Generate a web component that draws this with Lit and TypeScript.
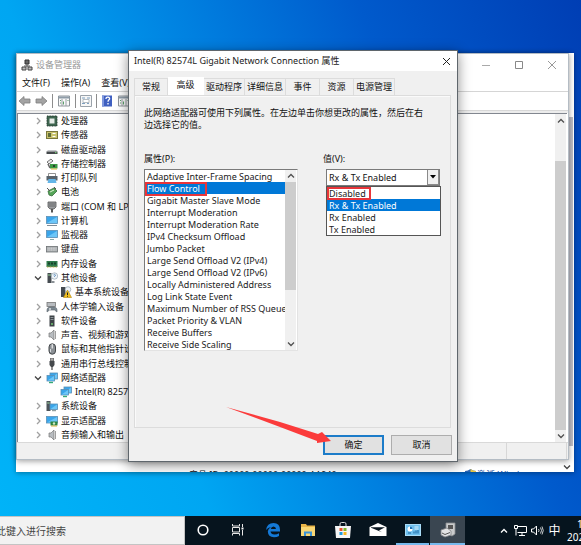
import { LitElement, html, svg, css } from "lit";
import type { TemplateResult } from "lit";
import { customElement } from "lit/decorators.js";
import { classMap } from "lit/directives/class-map.js";

const monitor = (x: number, y: number, w: number, h: number) => svg`
  <rect x=${x} y=${y} width=${w} height=${h} fill="#3aa5ea" stroke="#5b8fb5" stroke-width=".8"/>
  <path d="M${x + 0.5} ${y + h - 0.5}L${x + w - 0.5} ${y + 0.5}V${y + h - 0.5}z" fill="#6cc6f8"/>`;

const speaker = svg`<path d="M3 4h2l3-3v10l-3-3H3z" fill="#b9bdc1" stroke="#777" stroke-width=".7"/><path d="M9.500 2v8" fill="none" stroke="#888" stroke-width=".8"/>`;

const dualMonitor = svg`${monitor(4, 1, 7.5, 6)}${monitor(1, 3.5, 7.5, 5.5)}<path d="M3 10.500h4" stroke="#35a877" stroke-width="1.400"/>`;

const deviceIcons: Record<string, unknown> = {
  cpu: svg`<rect x="1" y="1" width="10" height="10" fill="#3f6650" stroke="#263e32" stroke-dasharray="1 .6"/><rect x="3.500" y="3.500" width="5" height="5" fill="#e6ece8"/>`,
  sensor: svg`<rect x=".5" y="2.500" width="11" height="7" fill="#c9c36d" stroke="#7a773c"/><rect x="2" y="4" width="3" height="4" fill="#5f6c3a"/><path d="M6.500 4.500h3M6.500 7.500h3" stroke="#fff"/>`,
  disk: svg`<path d="M2 6h8l1.500 1.500H.5z" fill="#c3c6c9"/><rect x=".5" y="7.500" width="11" height="2.500" fill="#44484b"/><path d="M9 8.700h1.500" stroke="#7be07b"/>`,
  storage: svg`<path d="M1 4l4-3 2 2-4 3z" fill="#e8e8e8" stroke="#555" stroke-width=".8"/><path d="M2 6l2 4" stroke="#666" stroke-width="1.500"/><rect x="4" y="6" width="7.500" height="4.500" fill="#3c9a45"/><path d="M5 11h6" stroke="#e0b93b"/><circle cx="8" cy="8" r="1" fill="#222"/>`,
  printer: svg`<path d="M2.500 1.500h7V5h-7z" fill="#fff" stroke="#777" stroke-width=".8"/><rect x=".5" y="4" width="11" height="4.500" fill="#59636b"/><path d="M2.500 7h7l1 4h-9z" fill="#64b6e8"/>`,
  battery: svg`<path d="M2 5l6-3 3 3-5 5-3-1z" fill="#55a558" stroke="#376b3b" stroke-width=".8"/><path d="M1 2l4 4M8 1l2 2" stroke="#555"/><path d="M4 6l4-2" stroke="#dff5d5"/>`,
  port: svg`<path d="M2 1h8v5l-2 2H4L2 6z" fill="#9a9da0" stroke="#555" stroke-width=".8"/><path d="M4 2v4M6 2v4M8 2v4" stroke="#555" stroke-width=".7"/><path d="M6 8v3.500" stroke="#555" stroke-width="2"/>`,
  computer: svg`${monitor(0.5, 1.5, 11, 7)}<path d="M1 10.500h10" stroke="#7f8c96"/>`,
  monitor: svg`${monitor(0.5, 1.5, 11, 7)}<path d="M4 10.500h4" stroke="#8aa" />`,
  keyboard: svg`<rect x=".5" y="3.500" width="11" height="5.500" fill="#a9adb0" stroke="#6c7073" stroke-width=".8"/><path d="M1.500 5.200h9M1.500 7h9" stroke="#e6e6e6" stroke-width=".8" stroke-dasharray="1.200 .5"/>`,
  memory: svg`<rect x=".5" y="3" width="11" height="6" fill="#2f7a4c"/><path d="M2 4.500h2v2H2zM5 4.500h2v2H5zM8 4.500h2v2H8z" fill="#17402a"/><path d="M1 9h10" stroke="#bfa94a" stroke-dasharray="1 .5"/>`,
  other: svg`<path d="M1.500 1h4v10h-4z" fill="#454b50"/><path d="M2 3h3" stroke="#8fd08f"/><circle cx="8.500" cy="4" r="3.200" fill="#eef3f7" stroke="#8699a8" stroke-width=".6"/><path d="M7.500 3q1-1.300 2 0q0 .8-1 1.200v.7" fill="none" stroke="#3d77b0" stroke-width=".8"/><path d="M5.500 9h3v2h-3z" fill="#8c9297"/>`,
  warning: svg`<path d="M1 1h4.500v10H1z" fill="#454b50"/><circle cx="8" cy="3.500" r="2.800" fill="#eef3f7" stroke="#8699a8" stroke-width=".6"/><path d="M7.500 4l4 7.500h-8z" fill="#f3c11d" stroke="#b18511" stroke-width=".6"/><path d="M7.500 6.500v2.500M7.500 9.800v.9" stroke="#222"/>`,
  hid: svg`<rect x="1" y="1.500" width="8.500" height="4" fill="#b8bcc0" stroke="#777" stroke-width=".8"/><path d="M1 11q-.5-5 3-5h4q3.500 0 3 5l-2.500-2h-5z" fill="#7d8991" stroke="#59636b" stroke-width=".6"/><path d="M3 8h2M4 7v2" stroke="#fff" stroke-width=".7"/>`,
  software: svg`<rect x="3.500" y=".5" width="5" height="11" fill="#3d4347"/><path d="M4.500 2.500h3M4.500 4.500h3" stroke="#8c9499"/><circle cx="6" cy="9" r=".9" fill="#76d276"/>`,
  sound: speaker,
  mouse: svg`<rect x="3" y=".8" width="6.500" height="10.400" rx="3.200" fill="#8b9095" stroke="#44484b"/><path d="M6.200 1v4.500" stroke="#fff"/><path d="M4.500 6v3" stroke="#d8dcdf"/>`,
  usb: svg`<path d="M4.500 0h3v3h-3z" fill="#aaa" stroke="#555" stroke-width=".7"/><path d="M3.500 3h5v4L7 9H5L3.500 7z" fill="#45494c"/><path d="M6 9v3" stroke="#555" stroke-width="1.300"/>`,
  network: dualMonitor,
  system: svg`<path d="M.5 1h4v10h-4z" fill="#4c5359"/><path d="M1.200 3h2.500" stroke="#9fd89f"/>${monitor(4, 4, 7.5, 5.500)}<path d="M6 10.700h4" stroke="#788"/>`,
  display: svg`${monitor(0.5, 1.500, 11, 6.500)}<rect x="4.500" y="6.500" width="7" height="4" fill="#2e8541"/><circle cx="8" cy="8.500" r="1.200" fill="#cde7c8"/><path d="M5 11h6" stroke="#d9b440"/>`,
};

interface Device {
  name: string;
  icon: string;
  child?: boolean;
  open?: boolean;
}

const devices: Device[] = [
  { name: "处理器", icon: "cpu" },
  { name: "传感器", icon: "sensor" },
  { name: "磁盘驱动器", icon: "disk" },
  { name: "存储控制器", icon: "storage" },
  { name: "打印队列", icon: "printer" },
  { name: "电池", icon: "battery" },
  { name: "端口 (COM 和 LPT)", icon: "port" },
  { name: "计算机", icon: "computer" },
  { name: "监视器", icon: "monitor" },
  { name: "键盘", icon: "keyboard" },
  { name: "内存设备", icon: "memory" },
  { name: "其他设备", icon: "other", open: true },
  { name: "基本系统设备", icon: "warning", child: true },
  { name: "人体学输入设备", icon: "hid" },
  { name: "软件设备", icon: "software" },
  { name: "声音、视频和游戏控制器", icon: "sound" },
  { name: "鼠标和其他指针设备", icon: "mouse" },
  { name: "通用串行总线控制器", icon: "usb" },
  { name: "网络适配器", icon: "network", open: true },
  { name: "Intel(R) 82574L Gigabit", icon: "network", child: true },
  { name: "系统设备", icon: "system" },
  { name: "显示适配器", icon: "display" },
  { name: "音频输入和输出", icon: "sound" },
];

const properties = [
  "Adaptive Inter-Frame Spacing",
  "Flow Control",
  "Gigabit Master Slave Mode",
  "Interrupt Moderation",
  "Interrupt Moderation Rate",
  "IPv4 Checksum Offload",
  "Jumbo Packet",
  "Large Send Offload V2 (IPv4)",
  "Large Send Offload V2 (IPv6)",
  "Locally Administered Address",
  "Log Link State Event",
  "Maximum Number of RSS Queue",
  "Packet Priority & VLAN",
  "Receive Buffers",
  "Receive Side Scaling",
];

const values = ["Disabled", "Rx & Tx Enabled", "Rx Enabled", "Tx Enabled"];

const tabs = ["常规", "高级", "驱动程序", "详细信息", "事件", "资源", "电源管理"];

const base = css`
  * {
    box-sizing: border-box;
  }
  button,
  input,
  select {
    font: inherit;
    color: inherit;
    margin: 0;
    padding: 0;
    border: 0;
    background: none;
    border-radius: 0;
    outline: none;
  }
  ul {
    list-style: none;
    margin: 0;
    padding: 0;
  }
  svg {
    display: block;
    flex: none;
  }
`;

const chevron = (dir: "up" | "down" | "right", cls = "") => {
  const d = { up: "M1 5.500L4 2.500L7 5.500", down: "M1 2.500L4 5.500L7 2.500", right: "M3 1L6 4L3 7" }[dir];
  return html`<svg class=${cls} width="8" height="8" viewBox="0 0 8 8" aria-hidden="true">
    <path d=${d} fill="none" stroke="currentColor" stroke-width="1.300" />
  </svg>`;
};

@customElement("device-manager")
export class DeviceManager extends LitElement {
  static styles = [
    base,
    css`
      :host {
        display: flex;
        flex-direction: column;
        background: #fff;
        border: 1px solid #b4bcc4;
        box-shadow: 0 1px 6px rgba(0, 0, 0, 0.4);
      }
      .title {
        display: flex;
        align-items: center;
        height: 21px;
        padding: 0 8px 0 4px;
        color: #999;
      }
      .title h2 {
        flex: 1;
        margin: 0 0 0 3px;
        font: inherit;
      }
      .title button {
        display: grid;
        place-items: center;
        width: 16px;
        height: 16px;
        margin-left: 17px;
      }
      .menu {
        display: flex;
        gap: 11px;
        height: 17px;
        align-items: center;
        padding-left: 5px;
        border-bottom: 1px solid #d5d5d5;
      }
      .tools {
        display: flex;
        align-items: center;
        gap: 4px;
        height: 18px;
        padding-left: 1px;
      }
      .sep {
        width: 1px;
        height: 14px;
        background: #8d8d8d;
      }
      .edge {
        height: 3px;
        background: #ececec;
        border-top: 1px solid #d8d8d8;
      }
      .view {
        display: flex;
        border: 1px solid #828790;
        border-width: 1px 0 0 1px;
        margin-right: 1px;
      }
      .tree {
        flex: 1;
        display: grid;
        grid-template-rows: repeat(23, 1fr);
        min-height: 328px;
        overflow: hidden;
      }
      .node {
        display: flex;
        align-items: center;
        min-height: 0;
        padding-left: 16px;
        white-space: nowrap;
      }
      .node.child {
        padding-left: 42px;
      }
      .twist {
        width: 8px;
        height: 8px;
        margin-right: 4px;
        color: #a0a0a0;
      }
      .twist.open {
        color: #444;
      }
      .name {
        margin-left: 3px;
      }
      .scroll {
        display: flex;
        flex-direction: column;
        align-items: center;
        width: 11px;
        margin-right: 1px;
        padding: 3px 0 2px;
        background: #f0f0f0;
        color: #505050;
      }
      .thumb {
        flex: 1;
        width: 100%;
        margin: 36px 0 2px;
        background: #cdcdcd;
      }
      .status {
        display: grid;
        grid-template-columns: 1fr 60px;
        height: 17px;
        background: #f0f0f0;
        border-top: 1px solid #d9d9d9;
        padding-right: 1px;
      }
      .cell {
        border-right: 1px solid #d7d7d7;
      }
    `,
  ];

  render() {
    return html`
      <div class="title">
        <svg width="12" height="12" viewBox="0 0 12 12" aria-hidden="true">
          <path d="M4 1h4v4H4z" fill="#666" stroke="#333" />
          <path d="M1 8h4v3H1zM7 8h4v3H7z" fill="#bbb" stroke="#444" />
          <path d="M6 5v3M3 7h6" stroke="#555" />
        </svg>
        <h2>设备管理器</h2>
        <button aria-label="最小化"><svg width="8" height="8"><path d="M0 4.500h8" stroke="#aaa" /></svg></button>
        <button aria-label="最大化">
          <svg width="8" height="8"><path d="M.5 .5h7v7h-7z" fill="none" stroke="#888" /></svg>
        </button>
        <button aria-label="关闭"><svg width="8" height="8"><path d="M0 0l8 8M8 0l-8 8" stroke="#999" /></svg></button>
      </div>
      <div class="menu">
        <button>文件(F)</button>
        <button>操作(A)</button>
        <button>查看(V)</button>
      </div>
      <div class="tools">
        ${this.arrow(false)} ${this.arrow(true)}
        <span class="sep"></span>
        ${this.panel()}
        <span class="sep"></span>
        <button aria-label="属性">
          <svg width="12" height="12" viewBox="0 0 12 12">
            <path d="M.5 .5h11v11H.5z" fill="#f7f7f7" stroke="#9aa2aa" />
            <path d="M2 3h3M7 3h3M2 8.500h3M7 8.500h2" stroke="#7da0c0" />
            <path d="M3 4.500h6v3H3z" fill="#fff" stroke="#a5adb5" stroke-width=".8" />
          </svg>
        </button>
        <span class="sep"></span>
        <button aria-label="帮助">
          <svg width="12" height="12" viewBox="0 0 12 12">
            <path d="M1 .5h10v11H1z" fill="#3f5fc0" />
            <path d="M1 .5h2v11H1z" fill="#7f97dd" />
            <path d="M5 4q0-2 2-1.800t1.500 2q-1.500 1-1.500 2.500M7 8v1.500" fill="none" stroke="#fff" stroke-width="1.300" />
          </svg>
        </button>
        ${this.panel()}
      </div>
      <div class="edge"></div>
      <div class="view">
        <ul class="tree" role="tree">
          ${devices.map(
            (d) => html`<li class=${classMap({ node: true, child: !!d.child })} role="treeitem">
              ${d.child ? "" : chevron(d.open ? "down" : "right", d.open ? "twist open" : "twist")}
              <svg width="12" height="12" viewBox="0 0 12 12" aria-hidden="true">${deviceIcons[d.icon]}</svg>
              <span class="name">${d.name}</span>
            </li>`
          )}
        </ul>
        <div class="scroll">${chevron("up")}<span class="thumb"></span>${chevron("down")}</div>
      </div>
      <div class="status"><span class="cell"></span><span class="cell"></span></div>
    `;
  }

  private arrow(forward: boolean): TemplateResult {
    return html`<button aria-label=${forward ? "前进" : "后退"}>
      <svg width="13" height="12" viewBox="0 0 13 12">
        <path
          d=${forward ? "M12 6L7 1.500V4H1v4h6v2.500z" : "M1 6l5-4.500V4h6v4H6v2.500z"}
          fill="#a3a3a3"
          stroke="#7e7e7e"
          stroke-width=".8"
        />
      </svg>
    </button>`;
  }

  private panel(): TemplateResult {
    return html`<button aria-label="显示窗格">
      <svg width="14" height="12" viewBox="0 0 14 12">
        <path d="M1.500 1h11v10h-11z" fill="#fafafa" stroke="#8f959a" />
        <path d="M1.500 2.500h11" stroke="#8f9ca8" stroke-width="2" />
        <path d="M5 4v7M9 4v7" stroke="#9a9fa4" />
        <path d="M3 5.500h1M10.500 5.500h1M3 8h1M6.500 6.500v3" stroke="#5aa06a" />
      </svg>
    </button>`;
  }
}

@customElement("adapter-dialog")
export class AdapterDialog extends LitElement {
  static styles = [
    base,
    css`
      :host {
        display: block;
        background: #f0f0f0;
        border: 1px solid #5f666c;
        box-shadow: 0 3px 12px rgba(0, 0, 0, 0.45);
      }
      .title {
        display: flex;
        align-items: center;
        justify-content: space-between;
        height: 20px;
        padding: 0 5px;
        background: #fff;
        color: #222;
      }
      .title h2 {
        margin: 0;
        font: inherit;
      }
      .title button {
        padding: 1px;
      }
      .tabs {
        display: flex;
        align-items: flex-end;
        height: 24px;
        padding: 0 5px;
      }
      .tab {
        height: 17px;
        min-width: 34px;
        padding: 0 2px;
        border: 1px solid #dcdcdc;
        border-width: 1px 1px 0 0;
        white-space: nowrap;
      }
      .tab:first-child {
        border-left-width: 1px;
      }
      .tab.active {
        height: 18px;
        min-width: 36px;
        padding-bottom: 4px;
        background: #fff;
        border-color: #fff;
      }
      .page {
        display: flex;
        flex-direction: column;
        min-height: 333px;
        margin: 0 6px 0 5px;
        padding: 11px 9px 0;
        border: 1px solid #dcdcdc;
        box-shadow: inset 1px 1px #fafafa;
      }
      .hint {
        margin: 0;
        padding-right: 16px;
        line-height: 12px;
      }
      .fields {
        display: grid;
        grid-template-columns: 154px 115px;
        justify-content: space-between;
        align-items: start;
        margin-top: 22px;
      }
      .label {
        display: block;
        height: 16px;
        line-height: 12px;
      }
      .label.value {
        margin-left: -3px;
      }
      .box {
        position: relative;
        display: flex;
        background: #fff;
        border: 1px solid #7a7a7a;
        border-right-color: #e3e3e3;
        border-bottom-color: #e3e3e3;
        padding-right: 1px;
      }
      .list {
        flex: 1;
        min-width: 0;
        display: block;
        height: auto;
        overflow: hidden;
        scrollbar-width: none;
        color: #222;
      }
      .list option {
        height: 12px;
        min-height: 12px;
        padding: 0 0 0 2px;
        line-height: 12px;
        font-size: 9px;
      }
      .list option:checked {
        color: #fff;
        background: #0078d7 linear-gradient(#0078d7, #0078d7);
      }
      .scroll {
        display: flex;
        flex-direction: column;
        align-items: center;
        width: 11px;
        padding: 2px 0;
        background: #f0f0f0;
        color: #505050;
      }
      .thumb {
        width: 100%;
        flex: 0 0 108px;
        margin: 2px 0 auto;
        background: #cdcdcd;
      }
      .combo {
        position: relative;
        display: flex;
        height: 17px;
        margin-right: 1px;
        background: #fff;
        border: 1px solid #7a7a7a;
      }
      .combo select {
        flex: 1;
        appearance: none;
        padding-left: 2px;
      }
      .arrow {
        position: absolute;
        right: 0;
        top: 0;
        bottom: 0;
        display: grid;
        place-items: center;
        width: 12px;
        background: #f0f0f0;
        border: 1px solid #8a8a8a;
        border-width: 0 1px 1px 1px;
        pointer-events: none;
      }
      .drop {
        position: relative;
        display: flex;
        background: #fff;
        border: 1px solid #555;
      }
      .mark {
        position: absolute;
        border: 2px solid #e8353a;
        pointer-events: none;
      }
      .mark.flow {
        left: 0;
        top: 12px;
        width: 62px;
        height: 14px;
      }
      .mark.disabled {
        left: 0;
        top: 0;
        width: 44px;
        height: 13px;
      }
      .actions {
        position: relative;
        display: flex;
        justify-content: flex-end;
        gap: 7px;
        padding: 7px 5px 6px 0;
      }
      .action {
        width: 61px;
        height: 20px;
        background: #e1e1e1;
        border: 1px solid #adadad;
      }
      .action.primary {
        border: 2px solid #1c7cc9;
      }
      .pointer {
        position: absolute;
        right: 125px;
        bottom: 16px;
        pointer-events: none;
      }
    `,
  ];

  render() {
    return html`
      <div class="title">
        <h2>Intel(R) 82574L Gigabit Network Connection 属性</h2>
        <button aria-label="关闭">
          <svg width="9" height="9"><path d="M1 1l7 7M8 1l-7 7" stroke="#222" /></svg>
        </button>
      </div>
      <div class="tabs" role="tablist">
        ${tabs.map(
          (t) => html`<button role="tab" class=${classMap({ tab: true, active: t === "高级" })}>${t}</button>`
        )}
      </div>
      <div class="page">
        <p class="hint">此网络适配器可使用下列属性。在左边单击你想更改的属性，然后在右<br />边选择它的值。</p>
        <div class="fields">
          <div>
            <label class="label" for="property">属性(P):</label>
            <div class="box">
              <select id="property" class="list" size="15">
                ${properties.map((p) => html`<option ?selected=${p === "Flow Control"}>${p}</option>`)}
              </select>
              <div class="scroll">${chevron("up")}<span class="thumb"></span>${chevron("down")}</div>
              <span class="mark flow"></span>
            </div>
          </div>
          <div>
            <label class="label value" for="value">值(V):</label>
            <div class="combo">
              <select id="value">
                ${values.map((v) => html`<option ?selected=${v === "Rx & Tx Enabled"}>${v}</option>`)}
              </select>
              <span class="arrow"><svg width="6" height="4"><path d="M0 0h6L3 3.500z" /></svg></span>
            </div>
            <div class="drop">
              <select class="list" size="4" aria-label="值">
                ${values.map((v) => html`<option ?selected=${v === "Rx & Tx Enabled"}>${v}</option>`)}
              </select>
              <span class="mark disabled"></span>
            </div>
          </div>
        </div>
      </div>
      <div class="actions">
        <button class="action primary">确定</button>
        <button class="action">取消</button>
        <svg class="pointer" width="106" height="38" viewBox="0 0 106 38" aria-hidden="true">
          <path d="M0 0L54 15L92 27L96 25L105 34L91 36L91 34L54 20Z" fill="#fb3b3b" />
        </svg>
      </div>
    `;
  }
}

const apps: { label: string; state?: string; art: unknown }[] = [
  { label: "Cortana", art: svg`<circle cx="9" cy="9" r="4.800" fill="none" stroke="#fff" stroke-width="1.600"/>` },
  {
    label: "任务视图",
    art: svg`<path d="M3.500 3v2h7V3M3.500 14.500v-2h7v2M3.500 6.500h7v4.500h-7zM13.500 3v3M13.500 9v5.500" fill="none" stroke="#e8e8e8"/><path d="M12.500 6.500h2v2h-2z" fill="#fff"/>`,
  },
  {
    label: "Edge",
    art: svg`<path d="M2 9Q3 2 9.500 2Q16 2.200 16 9v1.500H6.500Q7 13.500 10.500 13.500Q13 13.500 15 12.200V15Q13 16.200 10 16.200Q4 16 3.800 10.500Q4 7.500 7 6Q4 6.500 2 9M6.800 8h5.200Q11.800 5.500 9.500 5.500Q7.300 5.600 6.800 8z" fill="#1479d6" fill-rule="evenodd"/>`,
  },
  {
    label: "文件资源管理器",
    art: svg`<path d="M2 3h5l1 1.500h8V15H2z" fill="#e9b548"/><path d="M2 6h14v9H2z" fill="#f8d775"/><path d="M5 15v-4.500h8V15h-2v-2.500H7V15z" fill="#3c93d6"/>`,
  },
  {
    label: "Microsoft Store",
    art: svg`<path d="M6 5V3q0-1.500 1.500-1.500h3Q12 1.500 12 3v2" fill="none" stroke="#ddd"/><path d="M1 5h16l-1 12H2z" fill="#f5f5f5"/><path d="M5.500 7h3v3h-3z" fill="#e8502b"/><path d="M9.500 7h3v3h-3z" fill="#7db72f"/><path d="M5.500 11h3v3h-3z" fill="#1f9bdc"/><path d="M9.500 11h3v3h-3z" fill="#f6b51e"/>`,
  },
  {
    label: "邮件",
    art: svg`<path d="M.5 6L9 2l8.500 4v9H.5z" fill="#fff"/><path d="M2 6.200h14L10 9.500l3 1.800L2 6.800z" fill="#08151f"/>`,
  },
  {
    label: "控制面板",
    state: "running",
    art: svg`<rect x="1.500" y="3.500" width="15" height="11" fill="#6fc0ee" stroke="#a9dcf7"/><circle cx="6" cy="8" r="2.500" fill="#fff"/><path d="M6 8V5.500A2.500 2.500 0 0 1 8.500 8z" fill="#1c73b8"/><path d="M10.500 6h4M10.500 8h4" stroke="#dff3fd"/><path d="M4 12h3M10 12.500v-2M12 12.500v-3M14 12.500V9" stroke="#17629f"/>`,
  },
  {
    label: "设备管理器",
    state: "running active",
    art: svg`<path d="M7 2h9v11l-3 2-6-3z" fill="#c9cbcc" stroke="#8a8d90" stroke-width=".8"/><path d="M9 4h5v4H9z" fill="#555"/><path d="M2 9l6-2 4 3v4l-6 2-4-2z" fill="#e2e3e4" stroke="#808386" stroke-width=".8"/><path d="M3 12l3 1.500 5-2" fill="none" stroke="#555"/>`,
  },
];

@customElement("task-bar")
export class TaskBar extends LitElement {
  static styles = [
    base,
    css`
      :host {
        display: flex;
        height: 29px;
        overflow: hidden;
        background: #06141e;
        color: #fff;
        font-size: 10px;
      }
      .search {
        width: 185px;
        background: #f2f2f2;
        border: 1px solid #c4c4c4;
        border-width: 1px 1px 1px 0;
        text-indent: -4px;
      }
      .search::placeholder {
        color: #444;
        opacity: 1;
      }
      .app {
        display: grid;
        place-items: center;
        width: 35px;
        border-bottom: 2px solid transparent;
      }
      .app.running {
        border-image: linear-gradient(to right, transparent 3px, #76b9ed 3px 32px, transparent 32px) 2;
      }
      .app.active {
        background: #3a4651;
        border-image: none;
        border-color: #76b9ed;
      }
      .tray {
        display: flex;
        align-items: center;
        margin-left: auto;
      }
      .tray button {
        display: grid;
        place-items: center;
        width: 17px;
        height: 28px;
      }
      .ime {
        font-size: 12px;
      }
      .clock {
        display: grid;
        width: 18px;
        padding-left: 4px;
        line-height: 13px;
        overflow: hidden;
        white-space: nowrap;
      }
      .time {
        padding-left: 10px;
      }
    `,
  ];

  render() {
    return html`
      <input class="search" aria-label="搜索" placeholder="此键入进行搜索" />
      ${apps.map(
        (a) => html`<button class="app ${a.state ?? ""}" aria-label=${a.label}>
          <svg width="18" height="18" viewBox="0 0 18 18">${a.art}</svg>
        </button>`
      )}
      <div class="tray">
        <button aria-label="显示隐藏的图标">${chevron("up")}</button>
        <button aria-label="网络">
          <svg width="13" height="13" viewBox="0 0 13 13">
            <path d="M3.500 2.500h9v6h-9M8 8.500v3M5 11.500h6M.5 1.500h3v3h-3zM2 4.500v7" fill="none" stroke="#fff" />
          </svg>
        </button>
        <button aria-label="音量">
          <svg width="13" height="13" viewBox="0 0 13 13">
            <path d="M.5 5h2l3-3v9l-3-3h-2z" fill="none" stroke="#fff" />
            <path d="M7.500 5q1 1.500 0 3M9.500 3.500q2 3 0 6M11 2.500q2.500 4 0 8" fill="none" stroke="#fff" stroke-width=".8" />
          </svg>
        </button>
        <button class="ime">中</button>
        <div class="clock"><span class="time">1</span><span>202</span></div>
      </div>
    `;
  }
}

@customElement("app-root")
export class AppRoot extends LitElement {
  static styles = [
    base,
    css`
      :host {
        position: relative;
        display: flex;
        flex-direction: column;
        min-height: 100vh;
        overflow: hidden;
        font-family: "Noto Sans", "Noto Sans CJK SC", sans-serif;
        font-size: 9px;
        line-height: 12px;
        color: #111;
        background: linear-gradient(68deg, #00b4f8 0%, #00a6f2 28%, #0080e0 50%, #005acc 72%, #003eb4 100%);
      }
      .desktop {
        position: relative;
        flex: 1;
      }
      .system {
        position: absolute;
        top: 53px;
        left: 16px;
        right: 7px;
        height: 419px;
        display: flex;
        justify-content: space-between;
        align-items: flex-end;
        overflow: hidden;
        padding: 0 38px 0 173px;
        background: #fff;
        box-shadow: 0 1px 5px rgba(0, 0, 0, 0.35);
      }
      .line {
        display: flex;
        align-items: center;
        gap: 1px;
        height: 12px;
        margin-bottom: -9px;
      }
      .line a {
        color: #1a4fa0;
        text-decoration: none;
      }
      .rail {
        position: absolute;
        top: 64px;
        bottom: 26px;
        right: 1px;
        width: 4px;
        background: #bdbdc6;
      }
      .more {
        position: absolute;
        right: 3px;
        bottom: 1px;
        color: #444;
      }
      .manager {
        position: absolute;
        top: 53px;
        left: 16px;
        right: 12px;
      }
      .dialog {
        position: absolute;
        top: 50px;
        left: 128px;
        right: 123px;
      }
    `,
  ];

  render() {
    return html`
      <div class="desktop">
        <div class="system">
          <span class="line">产品 ID: 00000-00000-00000-AA940</span>
          <span class="line">
            <svg width="11" height="12" viewBox="0 0 11 12" aria-hidden="true">
              <path d="M5.500 0Q8 2 11 2Q11 9 5.500 12Q0 9 0 2Q3 2 5.500 0" fill="#2a62b0" />
              <path d="M5.500 0Q8 2 11 2L10.500 6h-5z" fill="#e5c443" />
            </svg>
            <a href="#">激活 Windows</a>
          </span>
          <span class="rail"></span>
          ${chevron("down", "more")}
        </div>
        <device-manager class="manager"></device-manager>
        <adapter-dialog class="dialog"></adapter-dialog>
      </div>
      <task-bar></task-bar>
    `;
  }
}
